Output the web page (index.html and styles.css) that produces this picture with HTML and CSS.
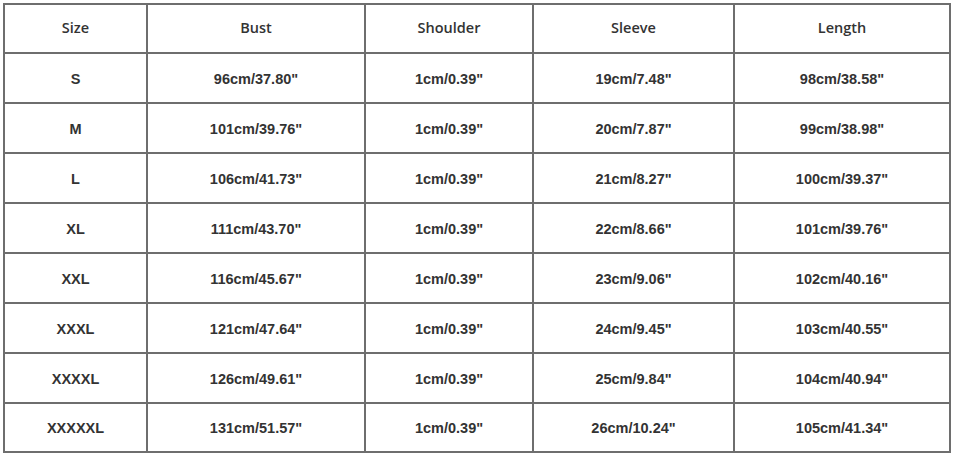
FILE: index.html
```html
<!DOCTYPE html>
<html>
<head>
<meta charset="utf-8">
<link rel="stylesheet" href="styles.css">
</head>
<body>
<table class="size-table">
  <colgroup>
    <col class="c1"><col class="c2"><col class="c3"><col class="c4"><col class="c5">
  </colgroup>
  <thead>
    <tr><th>Size</th><th>Bust</th><th>Shoulder</th><th>Sleeve</th><th>Length</th></tr>
  </thead>
  <tbody>
    <tr><td>S</td><td>96cm/37.80"</td><td>1cm/0.39"</td><td>19cm/7.48"</td><td>98cm/38.58"</td></tr>
    <tr><td>M</td><td>101cm/39.76"</td><td>1cm/0.39"</td><td>20cm/7.87"</td><td>99cm/38.98"</td></tr>
    <tr><td>L</td><td>106cm/41.73"</td><td>1cm/0.39"</td><td>21cm/8.27"</td><td>100cm/39.37"</td></tr>
    <tr><td>XL</td><td>111cm/43.70"</td><td>1cm/0.39"</td><td>22cm/8.66"</td><td>101cm/39.76"</td></tr>
    <tr><td>XXL</td><td>116cm/45.67"</td><td>1cm/0.39"</td><td>23cm/9.06"</td><td>102cm/40.16"</td></tr>
    <tr><td>XXXL</td><td>121cm/47.64"</td><td>1cm/0.39"</td><td>24cm/9.45"</td><td>103cm/40.55"</td></tr>
    <tr><td>XXXXL</td><td>126cm/49.61"</td><td>1cm/0.39"</td><td>25cm/9.84"</td><td>104cm/40.94"</td></tr>
    <tr><td>XXXXXL</td><td>131cm/51.57"</td><td>1cm/0.39"</td><td>26cm/10.24"</td><td>105cm/41.34"</td></tr>
  </tbody>
</table>
</body>
</html>
```
FILE: styles.css
```css
html, body {
  margin: 0;
  padding: 0;
  background: #ffffff;
}
body {
  padding: 3px 0 0 3px;
}
.size-table {
  border-collapse: collapse;
  table-layout: fixed;
  width: 948px;
  color: #333333;
}
.c1 { width: 143px; }
.c2 { width: 218px; }
.c3 { width: 168px; }
.c4 { width: 201px; }
.c5 { width: 216px; }
.size-table th,
.size-table td {
  border: 2px solid #6e6e6e;
  text-align: center;
  vertical-align: middle;
  padding: 0;
}
.size-table th {
  font-family: "Open Sans", "Liberation Sans", sans-serif;
  font-weight: 600;
  font-size: 14.5px;
  height: 45px;
  padding-bottom: 2px;
}
.size-table td {
  font-family: "Liberation Sans", Arial, sans-serif;
  font-weight: 700;
  font-size: 14.5px;
  height: 47px;
  padding-top: 1px;
}
.size-table tbody tr:last-child td {
  height: 46px;
}
```
